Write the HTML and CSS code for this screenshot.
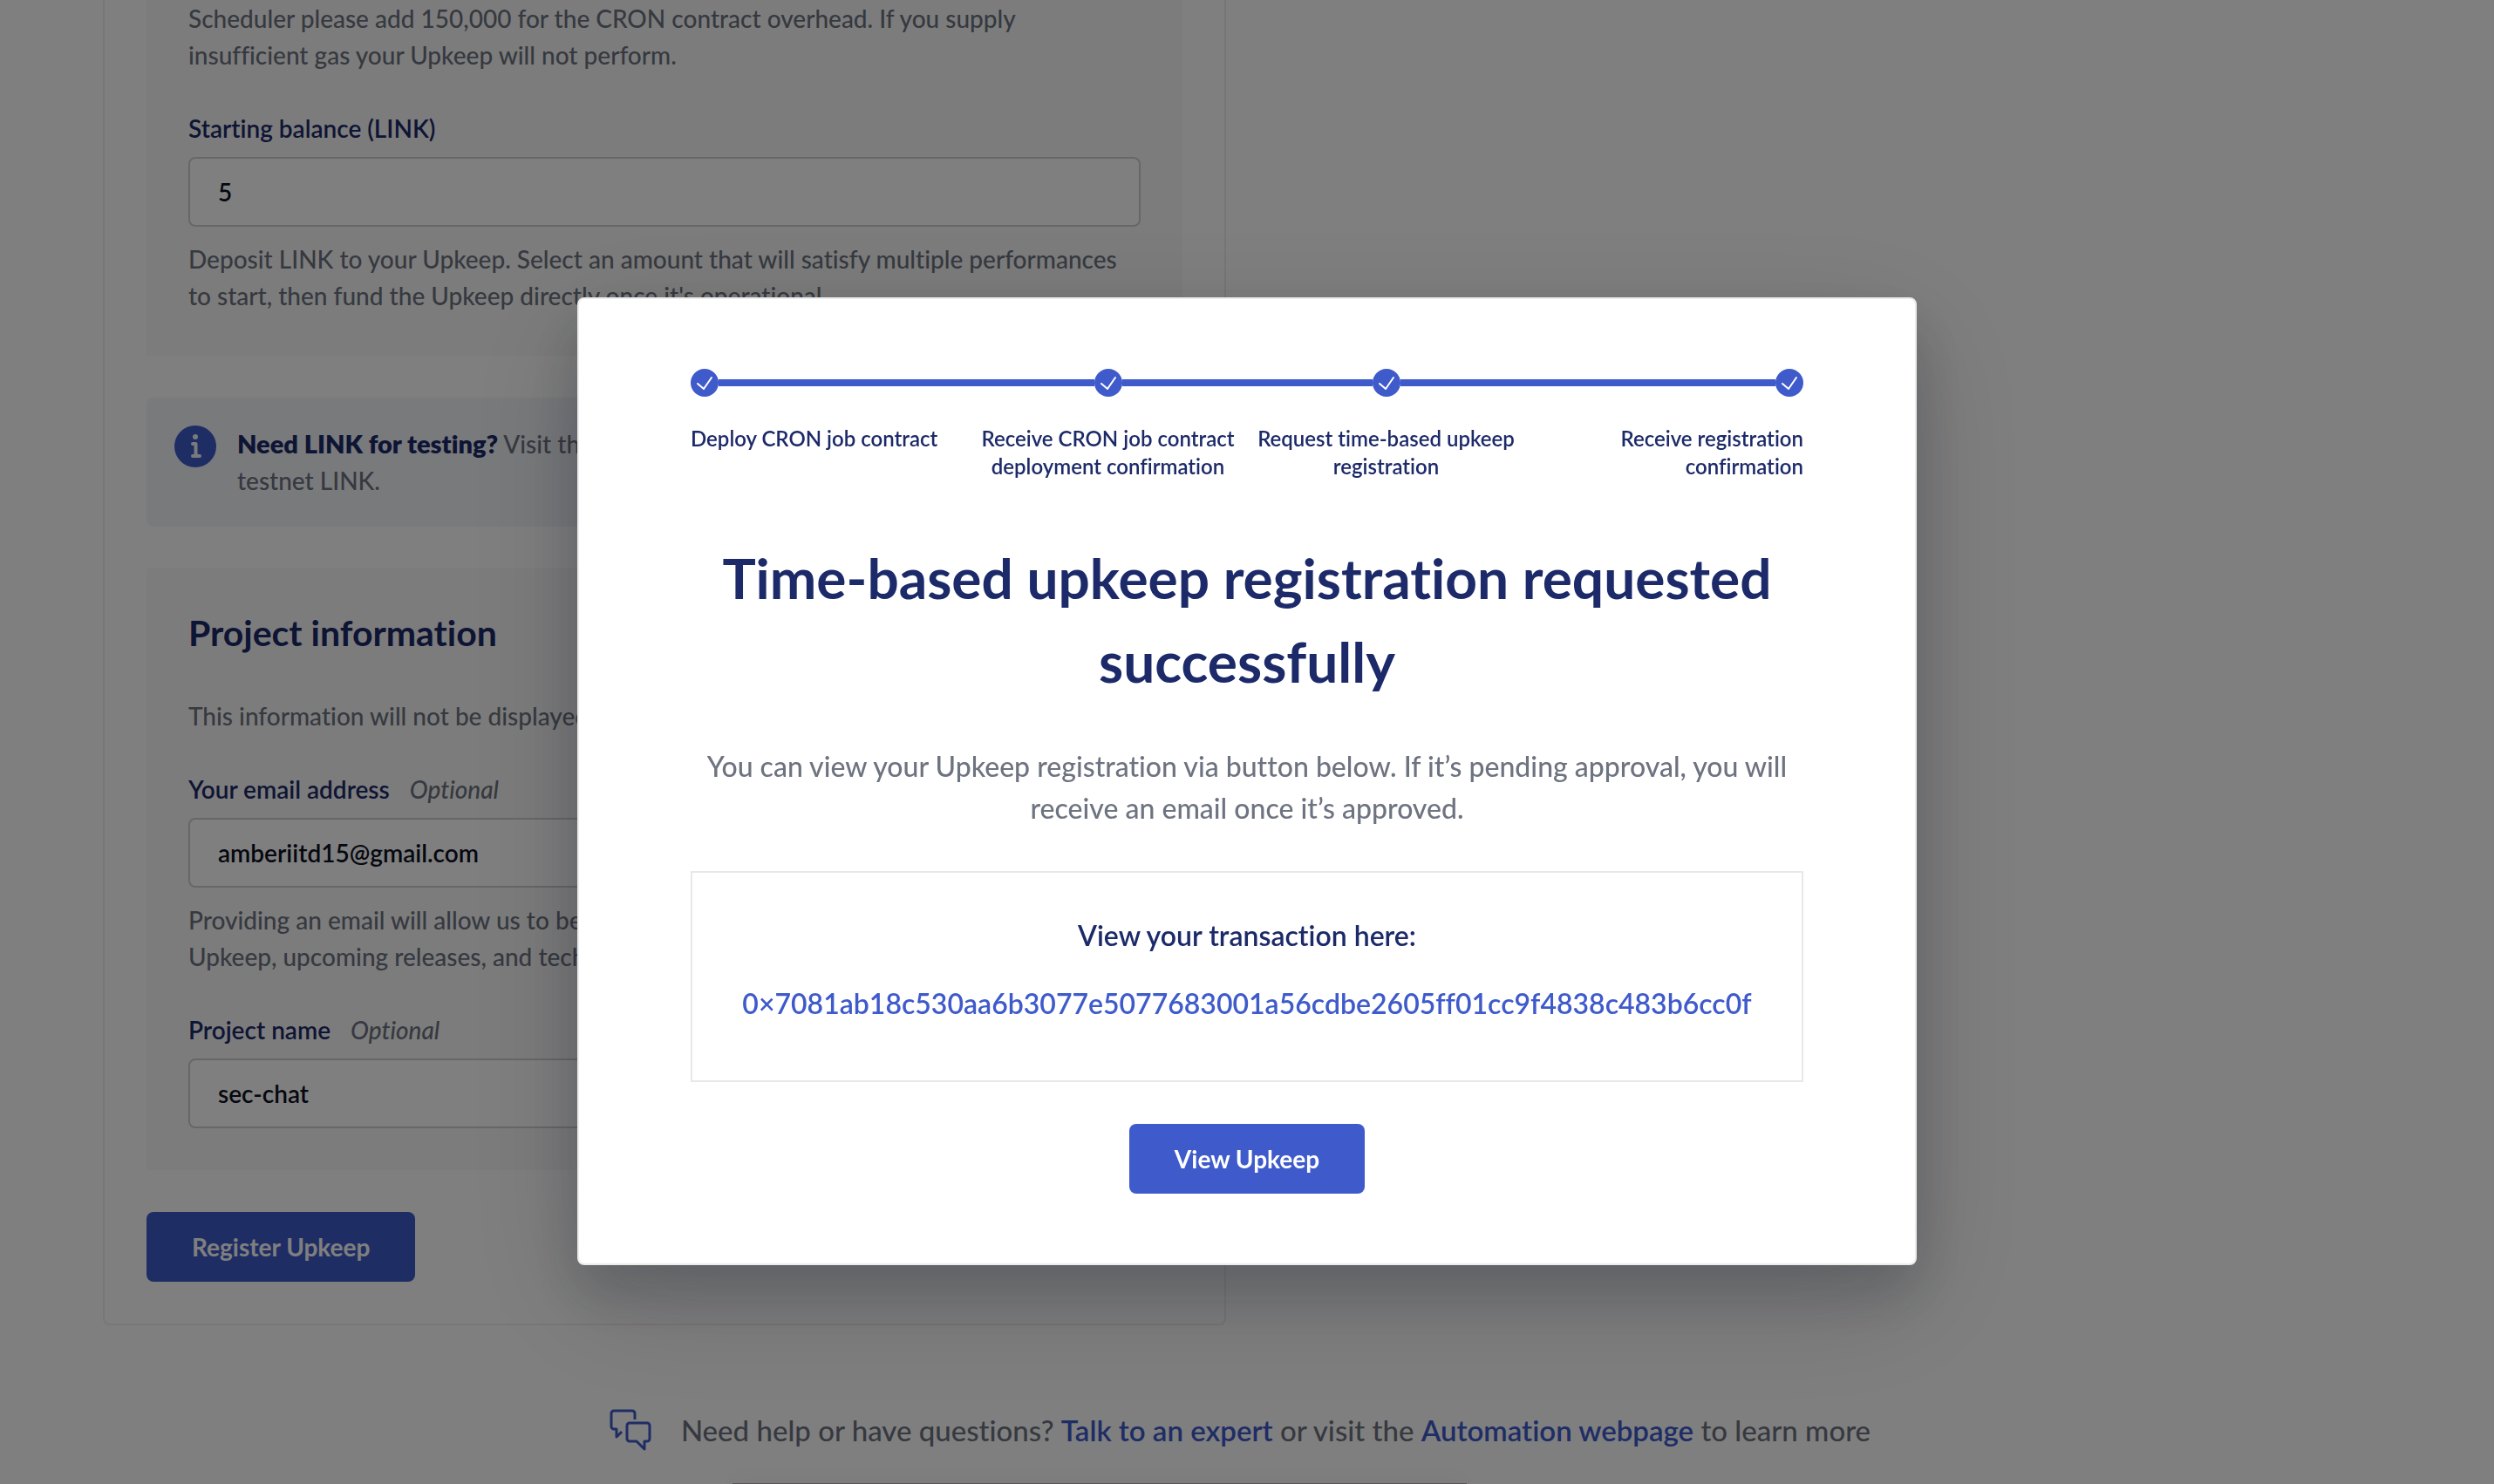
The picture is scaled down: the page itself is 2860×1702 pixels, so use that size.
FILE: index.html
```html
<!DOCTYPE html>
<html lang="en">
<head>
<meta charset="utf-8">
<meta name="viewport" content="width=device-width, initial-scale=1">
<title>Register new Upkeep</title>
<link rel="stylesheet" href="styles.css">
</head>
<body>
<main class="page">
  <form class="card">
    <section class="panel panel-first">
      <p class="hint">Scheduler please add 150,000 for the CRON contract overhead. If you supply<br>insufficient gas your Upkeep will not perform.</p>
      <div class="field">
        <label class="label" for="balance">Starting balance (LINK)</label>
        <input class="input" id="balance" type="text" value="5">
        <p class="hint">Deposit LINK to your Upkeep. Select an amount that will satisfy multiple performances<br>to start, then fund the Upkeep directly once it's operational.</p>
      </div>
    </section>

    <aside class="notice">
      <svg class="notice-icon" viewBox="0 0 48 48" aria-hidden="true">
        <circle class="notice-disc" cx="24" cy="24" r="24"/>
        <circle class="notice-dot" cx="24" cy="13" r="3"/>
        <path class="notice-stem" d="M21 21h3.500v14M21 35h8"/>
      </svg>
      <p class="hint"><strong class="notice-title">Need LINK for testing?</strong> Visit the Chainlink faucet to get<br>testnet LINK.</p>
    </aside>

    <section class="panel">
      <h2 class="panel-title">Project information</h2>
      <p class="hint">This information will not be displayed publicly.</p>
      <div class="field">
        <label class="label" for="email">Your email address <em class="optional">Optional</em></label>
        <input class="input" id="email" type="email" value="amberiitd15@gmail.com">
        <p class="hint">Providing an email will allow us to better notify you about your<br>Upkeep, upcoming releases, and technical updates.</p>
      </div>
      <div class="field">
        <label class="label" for="project">Project name <em class="optional">Optional</em></label>
        <input class="input" id="project" type="text" value="sec-chat">
      </div>
    </section>

    <button class="button" type="submit">Register Upkeep</button>
  </form>

  <footer class="help">
    <svg class="help-icon" viewBox="0 0 48 48" aria-hidden="true">
      <path d="M29 12V5a3 3 0 0 0-3-3H5a3 3 0 0 0-3 3v15a3 3 0 0 0 3 3h3v9l6-6"/>
      <path d="M23 16h20a3 3 0 0 1 3 3v15a3 3 0 0 1-3 3h-3v9l-9-9h-8a3 3 0 0 1-3-3V19a3 3 0 0 1 3-3z"/>
    </svg>
    <p class="help-text">Need help or have questions? <a class="link" href="#expert">Talk to an expert</a> or visit the <a class="link" href="#automation">Automation webpage</a> to learn more</p>
  </footer>
</main>

<div class="overlay">
  <div class="modal" role="dialog" aria-modal="true" aria-labelledby="modal-title">
    <ol class="steps">
      <li class="step">
        <div class="track">
          <svg class="check" viewBox="0 0 32 32" aria-hidden="true"><circle cx="16" cy="16" r="16"/><path d="M8 17l7 6L24 10"/></svg>
          <span class="bar"></span>
        </div>
        <span class="step-name">Deploy CRON job contract</span>
      </li>
      <li class="step">
        <div class="track">
          <span class="bar"></span>
          <svg class="check" viewBox="0 0 32 32" aria-hidden="true"><circle cx="16" cy="16" r="16"/><path d="M8 17l7 6L24 10"/></svg>
          <span class="bar"></span>
        </div>
        <span class="step-name">Receive CRON job contract deployment confirmation</span>
      </li>
      <li class="step">
        <div class="track">
          <span class="bar"></span>
          <svg class="check" viewBox="0 0 32 32" aria-hidden="true"><circle cx="16" cy="16" r="16"/><path d="M8 17l7 6L24 10"/></svg>
          <span class="bar"></span>
        </div>
        <span class="step-name">Request time-based upkeep registration</span>
      </li>
      <li class="step">
        <div class="track">
          <span class="bar"></span>
          <svg class="check" viewBox="0 0 32 32" aria-hidden="true"><circle cx="16" cy="16" r="16"/><path d="M8 17l7 6L24 10"/></svg>
        </div>
        <span class="step-name">Receive registration confirmation</span>
      </li>
    </ol>

    <h1 class="modal-title" id="modal-title">Time-based upkeep registration requested successfully</h1>
    <p class="modal-text">You can view your Upkeep registration via button below. If it’s pending approval, you will receive an email once it’s approved.</p>

    <div class="transaction">
      <p class="transaction-title">View your transaction here:</p>
      <a class="transaction-hash" href="#transaction">0×7081ab18c530aa6b3077e5077683001a56cdbe2605ff01cc9f4838c483b6cc0f</a>
    </div>

    <button class="button" type="button">View Upkeep</button>
  </div>
</div>
<div class="dock"></div>
</body>
</html>
```
FILE: styles.css
```css
:root {
  --blue: #3f5acb;
  --navy: #1c2a69;
  --muted: #6d7380;
  --line: #e8e8ea;
}

* {
  box-sizing: border-box;
}

body {
  margin: 0;
  overflow: hidden;
  background: #fff;
  color: var(--navy);
  font: 500 28px/42px Lato, "Liberation Sans", sans-serif;
  font-variant-ligatures: none;
}

h1, h2, p, ol {
  margin: 0;
  padding: 0;
}

/* Form card */

.card {
  display: flex;
  flex-direction: column;
  align-items: flex-start;
  gap: 48px;
  max-width: 1288px;
  margin-left: 118px;
  padding: 0 48px 48px;
  border: 2px solid #eee;
  border-top: 0;
  border-radius: 0 0 8px 8px;
}

.panel,
.notice {
  align-self: stretch;
}

.panel {
  padding: 48px;
  background: #f9f9f9;
}

.panel-first {
  padding-top: 0;
}

.panel-title {
  margin-bottom: 48px;
  font-size: 41px;
  font-weight: 700;
  line-height: 52px;
}

.hint {
  color: var(--muted);
}

.field {
  margin-top: 42px;
}

.label {
  display: block;
  margin-bottom: 12px;
  font-weight: 600;
}

.optional {
  margin-left: 16px;
  color: var(--muted);
  font-weight: 500;
}

.input {
  display: block;
  width: 100%;
  height: 80px;
  margin-bottom: 16px;
  padding: 0 32px;
  border: 2px solid #cfcfd2;
  border-radius: 8px;
  background: #fff;
  color: #0c1022;
  font: inherit;
  font-weight: 600;
}

.field:last-child .input:last-child {
  margin-bottom: 0;
}

.notice {
  display: flex;
  gap: 24px;
  padding: 32px;
  border-radius: 8px;
  background: #f2f4f9;
}

.notice-icon {
  flex: none;
  width: 48px;
  height: 48px;
}

.notice-disc {
  fill: var(--blue);
}

.notice-dot {
  fill: #f2f4f9;
}

.notice-stem {
  fill: none;
  stroke: #f2f4f9;
  stroke-width: 4;
  stroke-linecap: round;
  stroke-linejoin: round;
}

.notice-title {
  color: var(--navy);
  font-size: 29px;
  font-weight: 800;
}

.button {
  height: 80px;
  padding: 0 52px;
  border: 0;
  border-radius: 8px;
  background: var(--blue);
  color: #fff;
  font: inherit;
  font-weight: 700;
}

/* Help line */

.help {
  display: flex;
  justify-content: center;
  align-items: center;
  gap: 34px;
  padding: 96px 16px 40px 0;
  color: var(--muted);
  font-size: 33px;
  line-height: 48px;
}

.help-icon {
  flex: none;
  width: 48px;
  height: 48px;
  fill: none;
  stroke: var(--blue);
  stroke-width: 3;
  stroke-linejoin: round;
}

.link {
  color: var(--blue);
  font-weight: 600;
  text-decoration: none;
}

/* Dialog */

.overlay {
  position: fixed;
  inset: 0;
  display: flex;
  justify-content: center;
  align-items: center;
  padding-top: 90px;
  background: rgba(0, 0, 0, 0.5);
}

.modal {
  display: flex;
  flex-direction: column;
  align-items: center;
  width: 100%;
  max-width: 1536px;
  padding: 80px 128px;
  border: 2px solid #ebebec;
  border-radius: 8px;
  background: #fff;
  box-shadow: 0 32px 64px rgba(20, 26, 36, 0.2), 0 40px 140px rgba(20, 26, 36, 0.16);
  text-align: center;
}

.steps {
  display: grid;
  grid-template-columns: repeat(4, 1fr);
  align-self: stretch;
  list-style: none;
}

.track {
  display: flex;
  align-items: center;
  margin-bottom: 32px;
}

.bar {
  flex: 1;
  height: 8px;
  background: var(--blue);
}

.check {
  flex: none;
  width: 32px;
  height: 32px;
  fill: var(--blue);
}

.check path {
  fill: none;
  stroke: #fff;
  stroke-width: 2;
  stroke-linecap: round;
  stroke-linejoin: round;
}

.step-name {
  display: block;
  font-size: 24px;
  font-weight: 600;
  line-height: 32px;
}

.step:first-child {
  text-align: left;
}

.step:last-child {
  text-align: right;
}

.modal-title {
  margin: 64px 0 48px;
  font-size: 64px;
  font-weight: 700;
  line-height: 96px;
}

.modal-text {
  color: var(--muted);
  font-size: 32px;
  line-height: 48px;
}

.transaction {
  display: flex;
  flex-direction: column;
  align-items: center;
  align-self: stretch;
  gap: 30px;
  margin: 48px 0;
  padding: 48px 32px 64px;
  border: 2px solid var(--line);
  font-size: 32px;
  font-weight: 600;
  line-height: 48px;
}

.transaction-hash {
  color: var(--blue);
  text-decoration: none;
}

/* Sliver of the bar docked under the window's lower edge */

.dock {
  position: fixed;
  bottom: 0;
  left: 840px;
  width: 842px;
  height: 1px;
  background: #5a5355;
  box-shadow: 0 0 20px rgba(0, 0, 0, 0.3);
}
```
